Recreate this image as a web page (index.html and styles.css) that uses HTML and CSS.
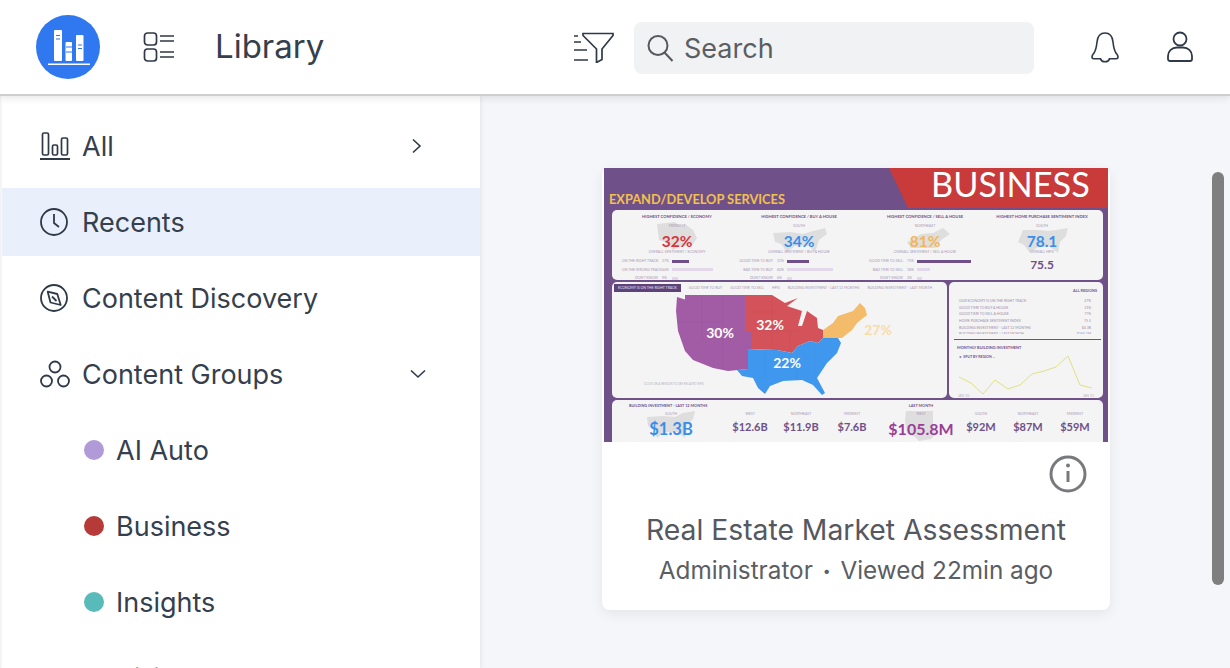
FILE: index.html
```html
<!DOCTYPE html>
<html lang="en">
<head>
    <meta charset="UTF-8">
    <meta name="viewport" content="width=device-width, initial-scale=1.0">
    <title>Library</title>
    <link rel="stylesheet" href="styles.css">
</head>
<body>
    <header class="topbar">
        <div class="logo">
            <svg width="64" height="64" viewBox="0 0 64 64">
                <circle cx="32" cy="32" r="32" fill="#2f78f0"/>
                <rect x="18" y="15" width="8" height="31" rx="1" fill="#fff"/>
                <rect x="29.500" y="27" width="6.500" height="19" rx="1" fill="#fff"/>
                <rect x="40" y="20" width="7.500" height="26" rx="1" fill="#fff"/>
                <rect x="12" y="48.500" width="42" height="1.500" fill="#fff"/>
                <path d="M20 20.500h4M20 24h4M30 32h6M30 37h6M42 30h4M42 33.500h4" stroke="#2f78f0" stroke-width="1.200"/>
            </svg>
        </div>
        <svg class="view-icon" width="32" height="32" viewBox="0 0 32 32" fill="none" stroke="#2f3947" stroke-width="1.700">
            <rect x="1.500" y="2" width="12" height="12" rx="3"/>
            <rect x="1.500" y="18" width="12" height="12" rx="3"/>
            <path d="M17 5h14M17 10h14M17 21h14M17 26h14"/>
        </svg>
        <h1 class="page-title">Library</h1>
        <div class="topbar-right">
            <svg class="filter-icon" width="42" height="32" viewBox="0 0 42 32" fill="none" stroke="#2f3947" stroke-width="1.700">
                <path d="M10 2.500h30v2L29 18v10.500l-5.500 3V18L10 4.500z"/>
                <path d="M1 5h4M1 11h7M1 19h13M1 29h14" stroke-width="1.500"/>
            </svg>
            <div class="search">
                <svg width="28" height="28" viewBox="0 0 28 28" fill="none" stroke="#55585e" stroke-width="2">
                    <circle cx="12" cy="11.500" r="9.500"/>
                    <path d="M18.500 18.500l8 8.500"/>
                </svg>
                <span>Search</span>
            </div>
            <svg class="bell" width="30" height="32" viewBox="0 0 30 32" fill="none" stroke="#2f3947" stroke-width="1.600">
                <path d="M15 2c-5 0-7.500 4-8 9-.5 5-1 8-3 11-1 1.500-2 2-2 4 0 1 .8 1.700 2 1.700h6.500c.5 2 2.200 3 4.500 3s4-1 4.500-3H26c1.200 0 2-.7 2-1.700 0-2-1-2.500-2-4-2-3-2.500-6-3-11-.5-5-3-9-8-9z"/>
            </svg>
            <svg class="user" width="28" height="32" viewBox="0 0 28 32" fill="none" stroke="#2f3947" stroke-width="1.800">
                <circle cx="14" cy="8" r="6.500"/>
                <path d="M2 28v-3c0-5 4-8.500 9-8.500h6c5 0 9 3.500 9 8.500v3c0 1.500-1 2-2 2H4c-1 0-2-.5-2-2z"/>
            </svg>
        </div>
    </header>

    <div class="page">
        <nav class="sidebar">
            <a class="nav-item">
                <svg class="nav-icon" width="30" height="28" viewBox="0 0 30 28" fill="none" stroke="#2f3947" stroke-width="1.700">
                    <rect x="2.500" y="1" width="6" height="22" rx="1.500"/>
                    <rect x="12.500" y="13" width="5" height="10" rx="1.500"/>
                    <rect x="21.500" y="6" width="6" height="17" rx="1.500"/>
                    <path d="M0 27h30" stroke-width="2"/>
                </svg>
                <span class="nav-label">All</span>
                <svg class="chev" width="12" height="16" viewBox="0 0 12 16" fill="none" stroke="#2f3947" stroke-width="1.600"><path d="M3 1.500L10 8l-7 6.500"/></svg>
            </a>
            <a class="nav-item active">
                <svg class="nav-icon" width="30" height="30" viewBox="0 0 30 30" fill="none" stroke="#2f3947" stroke-width="1.800">
                    <circle cx="14" cy="15" r="13"/>
                    <path d="M14 7v9l5 4"/>
                </svg>
                <span class="nav-label">Recents</span>
            </a>
            <a class="nav-item">
                <svg class="nav-icon" width="30" height="30" viewBox="0 0 30 30" fill="none" stroke="#2f3947" stroke-width="1.800">
                    <circle cx="14" cy="15" r="13"/>
                    <path d="M7.700 8.700L17.300 11l3.400 11-10.200-2.500z" stroke-linejoin="round"/>
                    <path d="M12 13.500l4.500 4.500"/>
                </svg>
                <span class="nav-label">Content Discovery</span>
            </a>
            <a class="nav-item">
                <svg class="nav-icon" width="30" height="30" viewBox="0 0 30 30" fill="none" stroke="#2f3947" stroke-width="1.800">
                    <circle cx="15" cy="8" r="5.500"/>
                    <circle cx="6.500" cy="22" r="5.500"/>
                    <circle cx="23.500" cy="22" r="5.500"/>
                </svg>
                <span class="nav-label">Content Groups</span>
                <svg class="chev-down" width="16" height="10" viewBox="0 0 16 10" fill="none" stroke="#2f3947" stroke-width="1.600"><path d="M1 1.500L8 8l7-6.500"/></svg>
            </a>
            <a class="nav-item sub"><i class="dot dot-lilac"></i><span class="nav-label">AI Auto</span></a>
            <a class="nav-item sub"><i class="dot dot-red"></i><span class="nav-label">Business</span></a>
            <a class="nav-item sub"><i class="dot dot-teal"></i><span class="nav-label">Insights</span></a>
            <a class="nav-item sub"><i class="dot dot-lilac"></i><span class="nav-label">Billing</span></a>
        </nav>

        <main class="content">
            <article class="card">
                <div class="thumb">
                    <div class="thumb-head">
                        <div class="thumb-title">EXPAND/DEVELOP SERVICES</div>
                        <div class="thumb-flag">BUSINESS</div>
                    </div>

                    <section class="panel kpis">
                        <div class="kpi">
                            <svg class="shape shape-mw" width="40" height="28" viewBox="0 0 40 28"><polygon points="0,2 18,0 24,5 28,2 36,8 40,16 36,22 22,25 16,28 8,20 2,18"/></svg>
                            <h4>HIGHEST CONFIDENCE / ECONOMY</h4>
                            <div class="kpi-region">MIDWEST</div>
                            <div class="kpi-value red">32%</div>
                            <div class="kpi-sub">OVERALL SENTIMENT / ECONOMY</div>
                            <div class="bar-row"><span>ON THE RIGHT TRACK</span><em>27%</em><b class="bar" style="width:17px"></b></div>
                            <div class="bar-row"><span>ON THE WRONG TRACK</span><em>64%</em><b class="bar light" style="width:41px"></b></div>
                            <div class="bar-row"><span>DON'T KNOW</span><em>9%</em><b class="bar light" style="width:6px"></b></div>
                        </div>
                        <div class="kpi">
                            <svg class="shape shape-so" width="54" height="24" viewBox="0 0 54 24"><polygon points="0,5 18,4 30,6 40,3 52,0 54,6 46,12 42,24 36,18 22,18 14,24 8,16 2,14"/></svg>
                            <h4>HIGHEST CONFIDENCE / BUY A HOUSE</h4>
                            <div class="kpi-region">SOUTH</div>
                            <div class="kpi-value blue">34%</div>
                            <div class="kpi-sub">OVERALL SENTIMENT / BUY A HOUSE</div>
                            <div class="bar-row"><span>GOOD TIME TO BUY</span><em>31%</em><b class="bar" style="width:22px"></b></div>
                            <div class="bar-row"><span>BAD TIME TO BUY</span><em>60%</em><b class="bar light" style="width:46px"></b></div>
                            <div class="bar-row"><span>DON'T KNOW</span><em>6%</em><b class="bar light" style="width:5px"></b></div>
                        </div>
                        <div class="kpi">
                            <svg class="shape shape-ne" width="43" height="20" viewBox="0 0 43 20"><polygon points="0,14 8,10 14,6 26,5 36,0 43,6 34,12 28,20 4,20"/></svg>
                            <h4>HIGHEST CONFIDENCE / SELL A HOUSE</h4>
                            <div class="kpi-region">NORTHEAST</div>
                            <div class="kpi-value orange">81%</div>
                            <div class="kpi-sub">OVERALL SENTIMENT / SELL A HOUSE</div>
                            <div class="bar-row"><span>GOOD TIME TO SELL</span><em>75%</em><b class="bar" style="width:54px"></b></div>
                            <div class="bar-row"><span>BAD TIME TO SELL</span><em>18%</em><b class="bar light" style="width:13px"></b></div>
                            <div class="bar-row"><span>DON'T KNOW</span><em>2%</em><b class="bar light" style="width:5px"></b></div>
                        </div>
                        <div class="kpi">
                            <svg class="shape shape-hp" width="50" height="25" viewBox="0 0 50 25"><polygon points="5,2 20,2 30,3 38,2 50,0 48,8 42,14 40,25 32,19 20,19 12,25 6,17 0,14"/></svg>
                            <h4>HIGHEST HOME PURCHASE SENTIMENT INDEX</h4>
                            <div class="kpi-region">SOUTH</div>
                            <div class="kpi-value blue">78.1</div>
                            <div class="kpi-sub">OVERALL HPSI</div>
                            <div class="kpi-total">75.5</div>
                        </div>
                    </section>

                    <div class="mid-row">
                        <section class="panel map-panel">
                            <div class="tabs">
                                <span class="tab on">ECONOMY IS ON THE RIGHT TRACK</span>
                                <span class="tab">GOOD TIME TO BUY</span>
                                <span class="tab">GOOD TIME TO SELL</span>
                                <span class="tab">HPSI</span>
                                <span class="tab">BUILDING INVESTMENT - LAST 12 MONTHS</span>
                                <span class="tab">BUILDING INVESTMENT - LAST MONTH</span>
                            </div>
                            <svg class="map" width="335" height="106" viewBox="612 292 335 106">
                                <polygon fill="#a25ca6" points="677,297 685,299.500 685,295 745,295 745,331 752,331 752,349 748,349 748,369 728,371 713,368 693,360 685,351 678,331 676,311"/>
                                <polygon fill="#d4525a" points="745,295 772,295 785,303 798,298 787,306 802,311 798,326 802,326 807,311 817,318 818,328 823,330 823,338 818,343 810,341 798,346 792,353 777,350 752,349 752,331 745,331"/>
                                <polygon fill="#3f98ee" points="748,349 777,350 792,353 798,346 810,341 818,343 823,338 838,338 841,343 837,353 827,363 817,378 825,393 822,395 813,385 802,380 783,381 770,386 765,394 758,388 753,378 742,376 737,370 748,369"/>
                                <polygon fill="#f3bc6a" points="823,330 833,323 838,316 853,311 860,303 865,308 867,315 857,323 852,330 842,338 823,338"/>
                                <path class="map-lines" d="M702 295v45M678 322h45v-27M723 322v47M745 312h34M772 295v55M752 331h46M790 331v20M765 349v30M797 353v28M815 345v35M838 338h-15"/>
                                <text x="720" y="338" class="map-num">30%</text>
                                <text x="770" y="330" class="map-num">32%</text>
                                <text x="787" y="368" class="map-num">22%</text>
                                <text x="878" y="335" class="map-num pale">27%</text>
                                <text x="644" y="385" class="map-note">CLICK ON A REGION TO SEE RELATED KPIS</text>
                            </svg>
                        </section>
                        <section class="panel side-panel">
                            <div class="regions-head">ALL REGIONS</div>
                            <div class="region-row"><span>OUR ECONOMY IS ON THE RIGHT TRACK</span><span>27%</span></div>
                            <div class="region-row"><span>GOOD TIME TO BUY A HOUSE</span><span>31%</span></div>
                            <div class="region-row"><span>GOOD TIME TO SELL A HOUSE</span><span>77%</span></div>
                            <div class="region-row"><span>HOME PURCHASE SENTIMENT INDEX</span><span>75.5</span></div>
                            <div class="region-row"><span>BUILDING INVESTMENT - LAST 12 MONTHS</span><span>$4.3B</span></div>
                            <div class="region-row clipped"><span>BUILDING INVESTMENT - LAST MONTH</span><span>$344.1M</span></div>
                            <div class="side-rule"></div>
                            <div class="monthly">MONTHLY BUILDING INVESTMENT</div>
                            <div class="split">&#9658; SPLIT BY REGION ...</div>
                            <svg class="spark" width="154" height="48" viewBox="949 350 154 48">
                                <polyline fill="none" stroke="#dde27e" stroke-width="1" points="959,377 971,383 983,394 995,380 1008,389 1020,385 1032,374 1044,371 1056,367 1068,356 1080,385 1092,388"/>
                                <text x="958" y="397" class="spark-date">JAN '20</text>
                                <text x="1083" y="397" class="spark-date">JAN '21</text>
                            </svg>
                        </section>
                    </div>

                    <section class="panel invest">
                        <div class="invest-col wide">
                            <h5>BUILDING INVESTMENT - LAST 12 MONTHS</h5>
                            <div class="invest-group">
                                <div class="invest-item main">
                                    <svg class="shape" width="48" height="27" viewBox="0 0 48 27"><polygon points="0,6 16,5 28,6 36,2 48,0 46,8 40,14 38,27 30,21 18,21 10,27 6,18 1,15"/></svg>
                                    <small>SOUTH</small><strong class="blue">$1.3B</strong>
                                </div>
                                <div class="invest-item"><small>WEST</small><strong>$12.6B</strong></div>
                                <div class="invest-item"><small>NORTHEAST</small><strong>$11.9B</strong></div>
                                <div class="invest-item"><small>MIDWEST</small><strong>$7.6B</strong></div>
                            </div>
                        </div>
                        <div class="invest-col second">
                            <h5>LAST MONTH</h5>
                            <div class="invest-group">
                                <div class="invest-item main">
                                    <svg class="shape" width="30" height="30" viewBox="0 0 30 30"><polygon points="1,0 28,0 28,12 30,24 26,28 14,30 10,26 2,22 0,10"/></svg>
                                    <small>WEST</small><strong class="violet">$105.8M</strong>
                                </div>
                                <div class="invest-item"><small>SOUTH</small><strong>$92M</strong></div>
                                <div class="invest-item"><small>NORTHEAST</small><strong>$87M</strong></div>
                                <div class="invest-item"><small>MIDWEST</small><strong>$59M</strong></div>
                            </div>
                        </div>
                    </section>
                </div>
                <div class="card-body">
                    <svg class="info" width="38" height="38" viewBox="0 0 38 38" fill="none" stroke="#77797d" stroke-width="3">
                        <circle cx="19" cy="19" r="17"/>
                        <path d="M19 16v11"/>
                        <circle cx="19" cy="10.500" r="2" fill="#77797d" stroke="none"/>
                    </svg>
                    <h2 class="card-title">Real Estate Market Assessment</h2>
                    <p class="card-meta">Administrator <span class="sep">&bull;</span> Viewed 22min ago</p>
                </div>
            </article>
            <div class="scrollbar"></div>
        </main>
    </div>
</body>
</html>
```

FILE: styles.css
```css
* {
    box-sizing: border-box;
}
body {
    margin: 0;
    height: 668px;
    overflow: hidden;
    font-family: Inter, "Liberation Sans", sans-serif;
    color: #353f4d;
    background-color: #f5f6f9;
}
h1, h2, h4, h5, p {
    margin: 0;
    font-weight: 400;
}

/* top bar */
.topbar {
    position: relative;
    z-index: 2;
    display: flex;
    align-items: center;
    height: 96px;
    padding: 0 36px;
    background: #fff;
    border-bottom: 2px solid #cfcfcf;
    box-shadow: 0 2px 8px rgba(0, 0, 0, 0.1);
}
.logo {
    height: 64px;
}
.view-icon {
    margin-left: 43px;
}
.page-title {
    margin: 0 0 3px 40px;
    font-size: 33px;
}
.topbar-right {
    display: flex;
    align-items: center;
    margin-left: auto;
}
.search {
    display: flex;
    align-items: center;
    gap: 10px;
    width: 400px;
    height: 52px;
    margin: 2px 0 0 19px;
    padding: 0 12px;
    background: #f1f2f4;
    border-radius: 8px;
    font-size: 27px;
    color: #5b5e63;
}
.bell {
    margin-left: 56px;
}
.user {
    margin-left: 46px;
}

/* sidebar */
.page {
    display: flex;
    height: 572px;
    overflow: hidden;
}
.sidebar {
    flex: none;
    display: flex;
    flex-direction: column;
    gap: 8px;
    width: 480px;
    padding: 16px 0 0 2px;
    background: #fff;
    box-shadow: inset 3px 0 3px -2px rgba(0, 0, 0, 0.08), 1px 0 4px rgba(0, 0, 0, 0.08);
}
.nav-item {
    flex: none;
    display: flex;
    align-items: center;
    height: 68px;
    padding: 0 54px 0 38px;
    font-size: 27px;
}
.nav-item.active {
    background: #e9f0fb;
}
.nav-icon {
    flex: none;
    margin-right: 12px;
}
.nav-label {
    flex: 1;
}
.chev {
    margin-right: 4px;
}
.nav-item.sub {
    padding-left: 82px;
}
.dot {
    flex: none;
    width: 20px;
    height: 20px;
    margin-right: 12px;
    border-radius: 50%;
}
.dot-lilac {
    background: #b09ad8;
}
.dot-red {
    background: #b53a38;
}
.dot-teal {
    background: #58bab9;
}

/* content */
.content {
    position: relative;
    flex: 1;
    padding: 72px 0 0 122px;
}
.scrollbar {
    position: absolute;
    top: 76px;
    right: 6px;
    width: 12px;
    height: 413px;
    background: #7f7f7f;
    border-radius: 6px;
}
.card {
    width: 508px;
    height: 442px;
    padding: 0 2px;
    background: #fff;
    border-radius: 8px;
    box-shadow: 0 4px 14px rgba(0, 0, 0, 0.07);
}
.card-body {
    position: relative;
    padding-top: 70px;
    text-align: center;
}
.info {
    position: absolute;
    top: 13px;
    right: 21px;
}
.card-title {
    font-size: 28.300px;
    line-height: 36px;
    color: #55585e;
}
.card-meta {
    margin-top: 5px;
    font-size: 24.300px;
    line-height: 34px;
    color: #5b5e63;
}
.sep {
    font-size: 14px;
    vertical-align: 3px;
    margin: 0 3px;
}

/* report thumbnail */
.thumb {
    display: flex;
    flex-direction: column;
    gap: 2px;
    height: 274px;
    overflow: hidden;
    background: #6f5089;
    font-family: Lato, "Liberation Sans", sans-serif;
    color: #6f5089;
}
.thumb-head {
    flex: none;
    display: flex;
    justify-content: space-between;
    height: 40px;
}
.thumb-title {
    padding: 22px 0 0 5px;
    font-size: 12.800px;
    line-height: 18px;
    font-weight: 700;
    color: #f2c14e;
}
.thumb-flag {
    width: 219px;
    padding-left: 42px;
    background: #c93a3a;
    clip-path: polygon(0 0, 100% 0, 100% 100%, 19px 100%);
    font-size: 34.300px;
    line-height: 31px;
    color: #fff;
}
.panel {
    background: #f4f4f4;
    border-radius: 5px;
}
.shape {
    position: absolute;
    fill: #dedede;
}
.kpis {
    flex: none;
    display: grid;
    grid-template-columns: 130px 114px 138px 96px;
    height: 70px;
    margin: 0 5px 0 8px;
    padding-top: 4px;
    overflow: hidden;
    text-align: center;
}
.kpi {
    position: relative;
    white-space: nowrap;
}
.shape-mw {
    top: 8px;
    left: 45px;
}
.shape-so {
    top: 14px;
    left: 31px;
}
.shape-ne {
    top: 14px;
    left: 51px;
}
.shape-hp {
    top: 14px;
    left: 24px;
}
.kpi h4, .kpi-region, .kpi-value, .kpi-sub, .kpi-total, .bar-row {
    position: relative;
}
.kpi h4 {
    font-size: 4.100px;
    line-height: 6px;
    font-weight: 700;
}
.kpi-region {
    margin-top: 3px;
    font-size: 3.500px;
    line-height: 6px;
    color: #a99ab6;
}
.kpi-value {
    margin-top: 2px;
    font-size: 15.500px;
    line-height: 20px;
    font-weight: 700;
}
.red {
    color: #d8343c;
}
.blue {
    color: #3a8eea;
}
.orange {
    color: #f3b558;
}
.violet {
    color: #9a3d98;
}
.kpi-sub {
    margin-top: -2px;
    font-size: 3.500px;
    line-height: 6px;
    color: #a99ab6;
}
.kpi-total {
    font-size: 12px;
    line-height: 16px;
    font-weight: 700;
    margin-top: 2px;
}
.bar-row {
    display: flex;
    align-items: center;
    height: 8.500px;
    margin-left: 10px;
    font-size: 3.500px;
    color: #a99ab6;
}
.kpi-sub + .bar-row {
    margin-top: 2px;
}
.kpi:nth-child(2) .bar-row {
    margin-left: -5px;
}
.kpi:nth-child(3) .bar-row {
    margin-left: 11px;
}
.bar-row span {
    flex: none;
    width: 36px;
    text-align: right;
}
.bar-row em {
    flex: none;
    width: 14px;
    padding-left: 4px;
    font-style: normal;
    text-align: left;
}
.bar {
    height: 3px;
    background: #6f5089;
}
.bar.light {
    background: #e3d8ea;
}
.mid-row {
    flex: none;
    display: flex;
    gap: 2px;
    height: 116px;
    margin: 0 5px 0 8px;
}
.map-panel {
    width: 335px;
    overflow: hidden;
}
.tabs {
    display: flex;
    align-items: center;
    gap: 8px;
    height: 10px;
    padding: 2px 0 0 2px;
    font-size: 3.500px;
    color: #a99ab6;
    white-space: nowrap;
}
.tab.on {
    padding: 2px 4px;
    background: #5d4379;
    color: #e8e0ee;
}
.map {
    display: block;
}
.map-lines {
    fill: none;
    stroke: rgba(0, 0, 0, 0.05);
    stroke-width: 0.600;
}
.map-num {
    font-family: Lato, "Liberation Sans", sans-serif;
    font-size: 14px;
    font-weight: 700;
    fill: #fff;
    text-anchor: middle;
}
.map-num.pale {
    fill: #f9dca6;
}
.map-note {
    font-size: 3px;
    fill: #b8b2bd;
}
.side-panel {
    position: relative;
    flex: 1;
    padding: 6px 6px 0 10px;
    overflow: hidden;
}
.regions-head {
    margin-bottom: 4px;
    font-size: 3.800px;
    line-height: 6px;
    font-weight: 700;
    text-align: right;
}
.region-row {
    display: flex;
    justify-content: space-between;
    height: 6.700px;
    padding-right: 6px;
    font-size: 3.500px;
    line-height: 6.700px;
    color: #9d8eab;
}
.region-row.clipped {
    height: 3px;
    overflow: hidden;
}
.side-rule {
    height: 1px;
    margin: 5px -4px 0 -5px;
    background: #6f5089;
}
.monthly {
    margin: 5px 0 0 -2px;
    font-size: 3.900px;
    line-height: 6px;
    font-weight: 700;
}
.split {
    margin-top: 3px;
    font-size: 3.500px;
    line-height: 6px;
    font-weight: 700;
}
.spark {
    position: absolute;
    left: 0;
    bottom: 0;
}
.spark-date {
    font-size: 3.200px;
    fill: #b8b2bd;
}
.invest {
    flex: none;
    display: flex;
    height: 60px;
    margin: 0 5px 0 8px;
    padding-top: 3px;
    color: #6f5089;
}
.invest-col.wide {
    flex: none;
    width: 261px;
    padding-left: 17px;
}
.invest h5 {
    height: 6px;
    font-size: 3.800px;
    line-height: 6px;
    font-weight: 700;
}
.invest-col.second h5 {
    width: 70px;
    margin-left: 13px;
    text-align: center;
}
.invest-group {
    display: flex;
    gap: 5px;
    margin-top: 2px;
}
.invest-col.second .invest-group {
    gap: 1px;
    margin-left: 13px;
}
.invest-item {
    position: relative;
    flex: none;
    width: 46px;
    text-align: center;
}
.invest-item.main {
    width: 64px;
    margin-right: 19px;
    margin-left: 10px;
}
.invest-col.second .invest-item.main {
    width: 70px;
    margin: 0 1px 0 0;
}
.invest-item .shape {
    top: 0;
    left: 8px;
}
.invest-col.second .shape {
    left: 19px;
}
.invest-item small, .invest-item strong {
    position: relative;
    display: block;
}
.invest-item small {
    font-size: 3.500px;
    line-height: 7px;
    color: #a99ab6;
}
.invest-item strong {
    font-size: 11px;
    line-height: 17px;
}
.invest-item.main strong {
    font-size: 16.500px;
    line-height: 22px;
}
.invest-col.second .main strong {
    font-size: 16px;
}
```
